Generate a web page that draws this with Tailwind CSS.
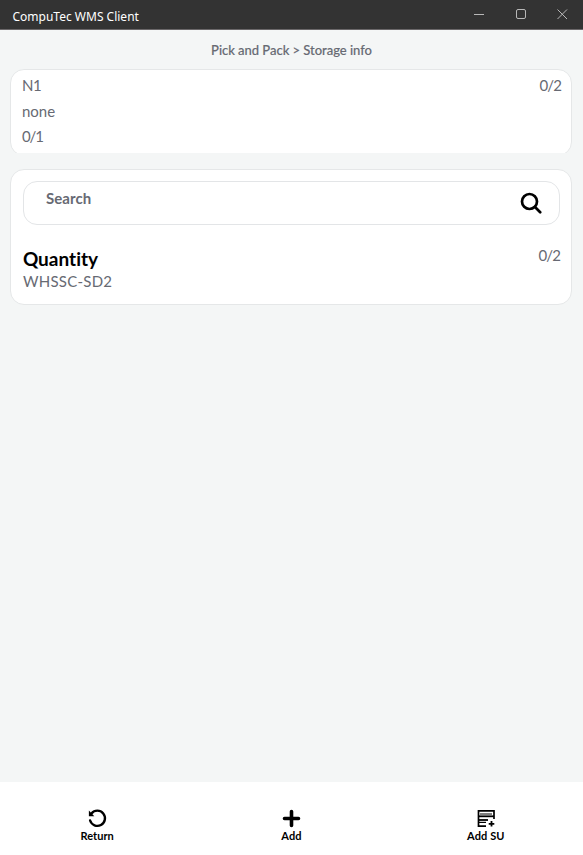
<!DOCTYPE html>
<html lang="en">
<head>
<meta charset="utf-8">
<title>CompuTec WMS Client</title>
<script src="https://cdn.jsdelivr.net/npm/@tailwindcss/browser@4"></script>
</head>
<body class="w-[583px] h-[855px] overflow-hidden flex flex-col bg-[#f4f6f6] text-[#676a73] font-['Lato',sans-serif] [font-variant-ligatures:none]">
<header class="h-[30px] shrink-0 bg-[#333333] border-b border-[#6b686a] flex items-center justify-between pl-[12.500px]">
  <h1 class="font-['Noto_Sans',sans-serif] text-[12px] leading-4 text-white pt-[4px]">CompuTec WMS Client</h1>
  <div class="flex h-full text-[#b8b8b8]">
    <svg class="w-[42px] h-7" viewBox="0 0 42 28" fill="none" stroke="currentColor"><path d="M17 14.500h10"/></svg>
    <svg class="w-[42px] h-7" viewBox="0 0 42 28" fill="none" stroke="currentColor"><rect x="17.500" y="9.500" width="9" height="9" rx="1.500"/></svg>
    <svg class="w-[42px] h-7" viewBox="0 0 42 28" fill="none" stroke="currentColor"><path d="M16.500 9.500l9.500 9.500M26 9.500l-9.500 9.500"/></svg>
  </div>
</header>
<nav class="h-[39px] shrink-0 pt-[10px] text-center text-[13px] leading-5 font-medium tracking-[-0.030px] [-webkit-text-stroke:0.150px_#676a73]">Pick and Pack &gt; Storage info</nav>
<main class="flex-1 pl-[10.400px] pr-[11px]">
  <section class="h-[84px] overflow-hidden">
    <div class="h-[87px] bg-white border-[1.500px] border-[#e5e7e8] rounded-[14px] pl-[10.500px] pr-[10px] pt-[3px] text-[15px] leading-[25.500px]">
      <div class="flex justify-between"><span class="tracking-[-0.300px]">N1</span><span class="tracking-[-0.900px]">0/2</span></div>
      <div>none</div>
      <div class="tracking-[-1px]">0/1</div>
    </div>
  </section>
  <section class="mt-4 h-[136px] bg-white border-[1.500px] border-[#e5e7e8] rounded-[14px] pl-[11.500px] pr-[11px] pt-[11px]">
    <div class="h-[44px] border border-[#e3e5e7] rounded-[14px] flex justify-between pl-[22px] pr-[17px]">
      <span class="pt-[6px] text-[15px] leading-5 font-bold tracking-[0.100px]">Search</span>
      <svg class="mt-[10px] w-[22px] h-[22px]" viewBox="0 0 22 22" fill="none" stroke="#000" stroke-width="2.700" stroke-linecap="round"><circle cx="9.500" cy="9.500" r="7.500"/><path d="M15 15l5.200 5.200"/></svg>
    </div>
    <div class="flex justify-between pt-[20px]">
      <div>
        <h2 class="text-[19px] leading-[26px] pt-px -mb-px font-bold text-black">Quantity</h2>
        <p class="text-[15px] leading-5 tracking-[0.250px]">WHSSC-SD2</p>
      </div>
      <span class="text-[15px] leading-5 tracking-[-0.900px]">0/2</span>
    </div>
  </section>
</main>
<footer class="h-[73px] shrink-0 bg-white text-black grid grid-cols-3 text-[11px] leading-[14px] font-bold">
  <button class="flex flex-col items-center pt-[27px]">
    <svg class="w-5 h-5" viewBox="0 0 20 20" fill="none" stroke="#000" stroke-width="2.400" stroke-linecap="round"><path d="M4.500 4.400A7.600 7.600 0 1 1 3.100 11.500"/><path d="M1.900 1.500v5.800h5.400z" fill="#000" stroke="none"/></svg>
    <span>Return</span>
  </button>
  <button class="flex flex-col items-center pt-[26px]">
    <svg class="w-5 h-5" viewBox="0 0 20 20" fill="none" stroke="#000" stroke-width="3.600" stroke-linecap="round"><path d="M10.500 3.500v14M3.500 10.500h14"/></svg>
    <span class="mt-px tracking-[0.100px]">Add</span>
  </button>
  <button class="flex flex-col items-center pt-[26px]">
    <svg class="w-5 h-5" viewBox="0 0 20 20" fill="none" stroke="#000"><path stroke-width="1.700" d="M18 11V2.800H2.500v15.400h7.500"/><path stroke-width="1.800" d="M2 8.300h16"/><path stroke-width="1" d="M4 6h12"/><path stroke-width="1.800" d="M3 12h9"/><path stroke-width="1.200" d="M3 14.400h7"/><path stroke-width="1.800" d="M15.500 13v5.600M12.700 15.800h5.600"/></svg>
    <span class="mt-px tracking-[0.100px]">Add SU</span>
  </button>
</footer>
</body>
</html>
